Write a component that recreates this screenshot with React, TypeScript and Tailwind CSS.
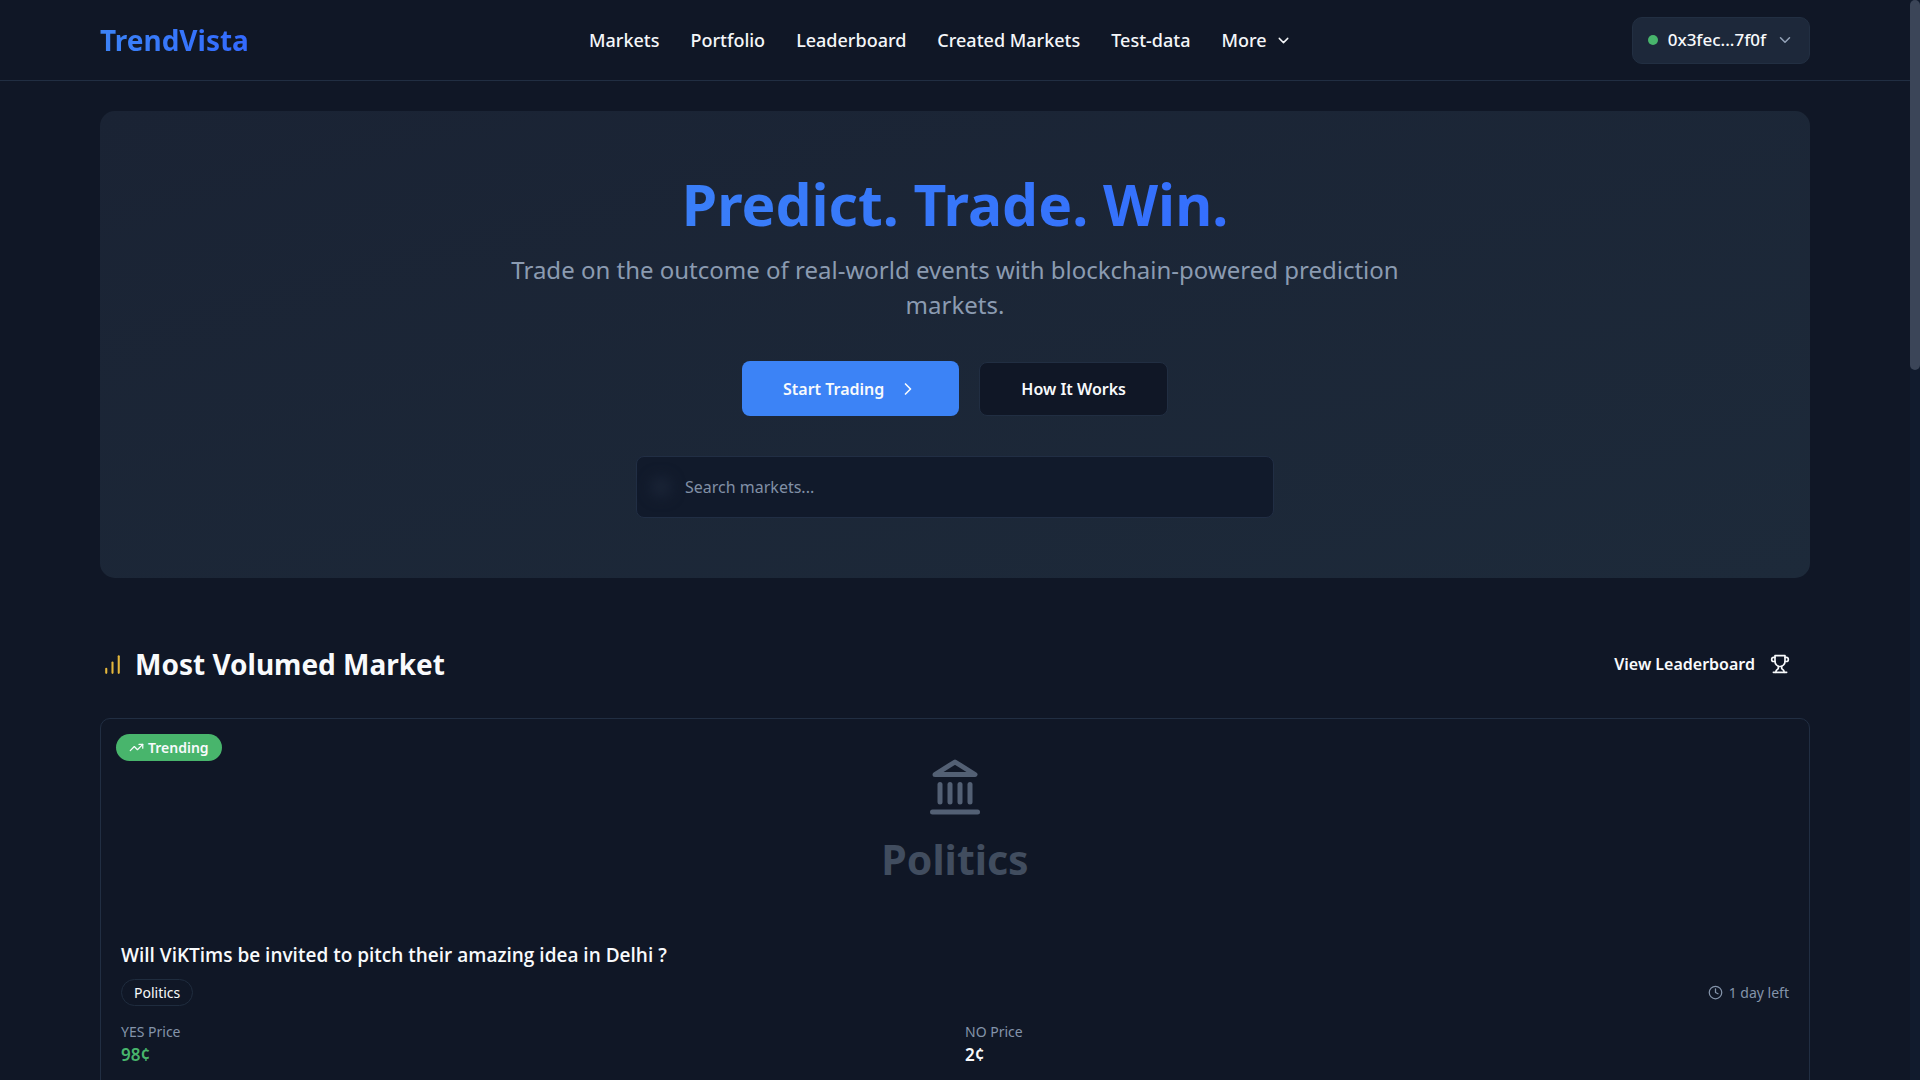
import { ChevronDown, ChevronRight, Clock, TrendingUp } from "lucide-react";

const links = ["Markets", "Portfolio", "Leaderboard", "Created Markets", "Test-data"];

function BarsIcon() {
  return (
    <svg className="size-[25px]" viewBox="0 0 24 24" fill="none" stroke="currentColor" strokeWidth="2" strokeLinecap="round" aria-hidden="true">
      <line x1="12" x2="12" y1="20" y2="10" />
      <line x1="18" x2="18" y1="20" y2="4" />
      <line x1="6" x2="6" y1="20" y2="16" />
    </svg>
  );
}

function TrophyIcon() {
  return (
    <svg className="size-5" viewBox="0 0 24 24" fill="none" stroke="currentColor" strokeWidth="2" strokeLinecap="round" strokeLinejoin="round" aria-hidden="true">
      <path d="M6 9H4.5a2.5 2.5 0 0 1 0-5H6" />
      <path d="M18 9h1.5a2.5 2.5 0 0 0 0-5H18" />
      <path d="M4 22h16" />
      <path d="M10 14.66V17c0 .55-.47.98-.97 1.21C7.85 18.75 7 20.24 7 22" />
      <path d="M14 14.66V17c0 .55.47.98.97 1.21C16.15 18.75 17 20.24 17 22" />
      <path d="M18 2H6v7a6 6 0 0 0 12 0V2Z" />
    </svg>
  );
}

function LandmarkIcon() {
  return (
    <svg className="size-[60px]" viewBox="0 0 24 24" fill="none" stroke="currentColor" strokeWidth="2" strokeLinecap="round" strokeLinejoin="round" aria-hidden="true">
      <line x1="3" x2="21" y1="22" y2="22" />
      <line x1="6" x2="6" y1="18" y2="11" />
      <line x1="10" x2="10" y1="18" y2="11" />
      <line x1="14" x2="14" y1="18" y2="11" />
      <line x1="18" x2="18" y1="18" y2="11" />
      <polygon points="12 2 20 7 4 7" />
    </svg>
  );
}

function Header() {
  return (
    <header className="border-b border-[#212e42]">
      <div className="mx-[100px] flex h-20 items-center justify-between">
        <a href="#home" className="bg-gradient-to-r from-[#3c83f6] to-[#3369ff] bg-clip-text text-[28px] font-bold text-transparent">
          TrendVista
        </a>
        <nav className="flex items-center gap-[31px] text-[18px] font-medium text-[#f4f6f9]">
          {links.map((l) => (
            <a key={l} href="#nav">{l}</a>
          ))}
          <button className="flex items-center gap-2">
            More
            <ChevronDown className="size-[17px]" />
          </button>
        </nav>
        <button className="flex h-[47px] items-center rounded-[10px] border border-[#222f42] bg-[#1d283a] px-[15px] text-[17px] font-medium text-[#f8fafc]">
          <span className="mr-2.5 size-2.5 rounded-full bg-[#48b56c]" />
          0x3fec...7f0f
          <ChevronDown className="ml-2.5 size-[18px] text-[#94a3b8]" />
        </button>
      </div>
    </header>
  );
}

function Hero() {
  return (
    <section className="flex flex-col items-center rounded-[15px] bg-gradient-to-br from-[#1a2334] to-[#1d2a3a] py-[60px] text-center">
      <h1 className="bg-gradient-to-r from-[#3c83f6] to-[#3369ff] bg-clip-text px-[180px] text-[57px] leading-[66px] font-bold text-transparent">
        Predict. Trade. Win.
      </h1>
      <p className="mt-[15px] max-w-[900px] text-[24px] leading-[35px] text-[#8b9bb1]">
        Trade on the outcome of real-world events with blockchain-powered prediction markets.
      </p>
      <div className="mt-[39px] flex items-center gap-5">
        <button className="flex h-[55px] items-center rounded-lg bg-[#3c83f6] px-[41px] text-[16px] font-semibold text-[#f8fafc]">
          Start Trading
          <ChevronRight className="ml-3.5 size-5" />
        </button>
        <button className="flex h-[54px] items-center rounded-lg border border-[#212e42] bg-[#101726] px-[41px] text-[16px] font-semibold text-[#f8fafc]">
          How It Works
        </button>
      </div>
      <label className="mt-10 flex h-[62px] w-full max-w-[638px] items-center rounded-lg border border-[#212e44] bg-[#111a2b] px-3.5">
        <span className="size-5 rounded-full bg-[#1b2538] blur-[7px]" />
        <input
          type="text"
          aria-label="Search markets"
          placeholder="Search markets..."
          className="ml-3.5 min-w-0 flex-1 bg-transparent text-[16px] text-[#f8fafc] outline-none placeholder:text-[#8190a6]"
        />
      </label>
    </section>
  );
}

function MarketCard() {
  return (
    <article className="relative mt-[30px] rounded-[10px] border border-[#212e42] px-5 pb-[100px]">
      <span className="absolute top-[15px] left-[15px] flex h-[27px] items-center gap-1 rounded-full bg-[#48b56c] px-[13px] text-[14px] font-semibold text-[#f8fafc]">
        <TrendingUp className="size-[15px]" />
        Trending
      </span>
      <div className="flex flex-col items-center pt-[38px]">
        <span className="text-[#536074]"><LandmarkIcon /></span>
        <p className="mt-3.5 text-[41px] leading-[56px] font-bold text-[#414d5f]">Politics</p>
      </div>
      <h3 className="mt-[54px] font-['Open_Sans','Noto_Sans',sans-serif] text-[19px] leading-7 font-semibold text-[#f8fafc]">
        Will ViKTims be invited to pitch their amazing idea in Delhi ?
      </h3>
      <div className="mt-2.5 flex items-center justify-between text-[14px]">
        <span className="flex h-[27px] items-center rounded-full border border-[#1f2c3e] px-3 text-[#f8fafc]">Politics</span>
        <span className="flex items-center gap-1.5 text-[#8494aa]">
          <Clock className="size-[15px]" />
          1 day left
        </span>
      </div>
      <dl className="mt-3.5 grid grid-cols-2 gap-5">
        <div>
          <dt className="text-[14px] leading-[23px] text-[#8494aa]">YES Price</dt>
          <dd className="text-[17px] leading-6 font-semibold text-[#48b56c]">98¢</dd>
        </div>
        <div>
          <dt className="text-[14px] leading-[23px] text-[#8494aa]">NO Price</dt>
          <dd className="text-[17px] leading-6 font-semibold text-[#f8fafc]">2¢</dd>
        </div>
      </dl>
    </article>
  );
}

export default function App() {
  return (
    <div className="flex h-screen overflow-hidden bg-[#101726] font-['Noto_Sans','Open_Sans',sans-serif]">
      <div className="min-w-0 flex-1 overflow-hidden">
        <Header />
        <main className="mx-[100px] pt-[30px]">
          <Hero />
          <section className="mt-[62px]">
            <div className="flex h-12 items-center justify-between">
              <h2 className="flex items-center gap-2.5 text-[28px] font-bold text-[#f8fafc]">
                <span className="text-[#e5b83c]"><BarsIcon /></span>
                Most Volumed Market
              </h2>
              <a href="#leaderboard" className="flex items-center gap-[15px] px-5 text-[16px] font-semibold text-[#f8fafc]">
                View Leaderboard
                <TrophyIcon />
              </a>
            </div>
            <MarketCard />
          </section>
        </main>
      </div>
      <div className="w-2.5 bg-[#111b2d]" aria-hidden="true">
        <div className="h-[34.26%] rounded-full bg-[#3b4558]" />
      </div>
    </div>
  );
}
